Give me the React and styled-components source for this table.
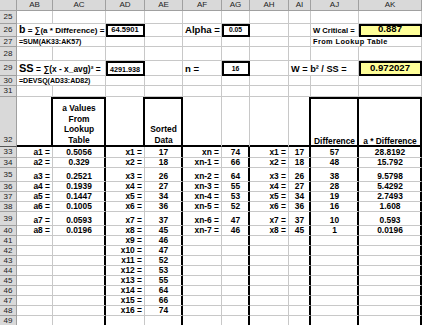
import React from 'react';
import styled, { createGlobalStyle } from 'styled-components';

const GRID = '#c8c8c8';
const INK = '#000';
const LETTERS = ['AB', 'AC', 'AD', 'AE', 'AF', 'AG', 'AH', 'AI', 'AJ', 'AK'];
const WIDTHS = [17, 36, 53, 39, 38, 39, 28, 39, 22, 48, 63];

const GlobalStyle = createGlobalStyle`
  html, body {
    margin: 0;
    padding: 0;
    background: #fff;
  }
  body {
    font-family: "Liberation Sans", Arial, sans-serif;
  }
`;

const Sheet = styled.div`
  display: grid;
  grid-template-columns: ${WIDTHS.map(w => `${w}px`).join(' ')};
  grid-template-rows: ${p => p.$rows};
  width: 422px;
  height: 325px;
  overflow: hidden;
  color: #000;
`;

const Head = styled.div`
  display: flex;
  align-items: ${p => (p.$bottom ? 'flex-end' : 'center')};
  justify-content: center;
  padding-bottom: ${p => (p.$bottom ? '2px' : '0')};
  background: #d9d9d9;
  border-right: 1px solid #a0a0a0;
  border-bottom: 1px solid ${p => (p.$dark ? '#555' : '#a0a0a0')};
  font-size: 8px;
  line-height: 1;
  color: #222;
`;

const shadow = p => {
  const s = [];
  if (p.$box) s.push(`inset 2px 2px 0 ${INK}`, `inset -1px -1px 0 ${INK}`);
  if (p.$r) s.push(`inset -1px 0 0 ${INK}`);
  if (p.$b) s.push(`inset 0 -1px 0 ${INK}`);
  if (p.$t) s.push(`inset 0 2px 0 ${INK}`);
  return s.length ? s.join(', ') : 'none';
};

const ALIGN = { left: 'flex-start', center: 'center', right: 'flex-end' };

const Cell = styled.div`
  grid-column: span ${p => p.$span || 1};
  min-width: 0;
  display: flex;
  flex-direction: column;
  justify-content: flex-end;
  align-items: ${p => ALIGN[p.$align || 'center']};
  text-align: ${p => p.$align || 'center'};
  padding: 0 ${p => (p.$box ? 3 : 2)}px ${p => (p.$box ? 2 : 1)}px;
  border-right: 1px solid ${p => (p.$r || p.$box ? INK : GRID)};
  border-bottom: 1px solid ${p => (p.$b || p.$box ? INK : GRID)};
  box-shadow: ${shadow};
  background: ${p => p.$bg || 'transparent'};
  font-size: ${p => p.$size || 8.4}px;
  font-weight: 700;
  letter-spacing: ${p => p.$track || 0}px;
  line-height: ${p => (p.$wrap ? 1.24 : 1)};
  white-space: ${p => (p.$wrap ? 'pre-line' : 'nowrap')};
`;

const Text = styled.span`
  display: block;
`;

const Big = styled.span`
  font-size: ${p => p.$size}px;
`;

const aVals = ['0.5056', '0.329', '0.2521', '0.1939', '0.1447', '0.1005', '0.0593', '0.0196'];
const sorted = [17, 18, 26, 27, 34, 36, 37, 45, 46, 47, 52, 53, 55, 64, 66, 74];
const diffs = [57, 48, 38, 28, 19, 16, 10, 1];
const prods = ['28.8192', '15.792', '9.5798', '5.4292', '2.7493', '1.608', '0.593', '0.0196'];
const dataHeights = [11, 10, 14, 10, 10, 10, 14, 10, 10, 10, 10, 10, 10, 10, 10, 10, 10];

const YELLOW = '#ffff99';

const topRows = [
  { n: 25, h: 13, cells: {} },
  {
    n: 26,
    h: 13,
    cells: {
      AB: { span: 2, align: 'left', size: 8.1, t: <><Big $size={10.5}>b</Big> = ∑(a * Difference) =</> },
      AD: { box: true, size: 7.6, t: '64.5901' },
      AF: { align: 'left', size: 9.6, t: 'Alpha =' },
      AG: { box: true, size: 6.8, t: '0.05' },
      AJ: { align: 'left', size: 7.6, t: 'W Critical =' },
      AK: { box: true, bg: YELLOW, size: 9.6, t: '0.887' },
    },
  },
  {
    n: 27,
    h: 10,
    cells: {
      AB: { span: 2, align: 'left', size: 7, t: '=SUM(AK33:AK57)' },
      AJ: { span: 2, align: 'left', size: 7.4, track: 0.4, t: 'From Lookup Table' },
    },
  },
  { n: 28, h: 14, cells: {} },
  {
    n: 29,
    h: 15,
    cells: {
      AB: { span: 2, align: 'left', size: 8.4, t: <><Big $size={11}>SS</Big> = ∑(x - x_avg)² =</> },
      AD: { box: true, size: 7.2, t: '4291.938' },
      AF: { align: 'left', size: 9.6, t: 'n =' },
      AG: { box: true, size: 6.8, t: '16' },
      AI: { span: 2, align: 'left', size: 9.2, t: 'W = b² / SS =' },
      AK: { box: true, bg: YELLOW, size: 9.6, t: '0.972027' },
    },
  },
  { n: 30, h: 10, cells: { AB: { span: 2, align: 'left', size: 7, t: '=DEVSQ(AD33:AD82)' } } },
  { n: 31, h: 11, cells: {} },
  {
    n: 32,
    h: 50,
    tall: true,
    cells: {
      AB: { r: true, b: true },
      AC: { r: true, b: true, t2: true, wrap: true, t: 'a Values\nFrom\nLookup\nTable' },
      AD: { r: true, b: true },
      AE: { r: true, b: true, t2: true, wrap: true, t: 'Sorted\nData' },
      AF: { b: true },
      AG: { b: true },
      AH: { b: true },
      AI: { r: true, b: true },
      AJ: { r: true, b: true, t2: true, t: 'Difference' },
      AK: { r: true, b: true, t2: true, t: 'a * Difference' },
    },
  },
];

const dataRows = dataHeights.map((h, i) => {
  const cells = {
    AC: { r: true },
    AE: { r: true },
    AG: { r: true },
    AI: { r: true },
    AJ: { r: true },
    AK: { r: true },
  };
  if (i < 8) {
    cells.AB = { align: 'right', t: `a${i + 1} =` };
    cells.AC.t = aVals[i];
    cells.AF = { align: 'right', t: i === 0 ? 'xn =' : `xn-${i} =` };
    cells.AG.t = sorted[15 - i];
    cells.AH = { align: 'right', t: `x${i + 1} =` };
    cells.AI.t = sorted[i];
    cells.AJ.t = diffs[i];
    cells.AK.t = prods[i];
  }
  if (i < 16) {
    cells.AD = { align: 'right', t: `x${i + 1} =` };
    cells.AE.t = sorted[i];
  }
  return { n: 33 + i, h, cells };
});

const rows = [...topRows, ...dataRows];

const SheetRow = ({ row }) => {
  const out = [
    <Head key="h" $bottom={row.tall} $dark={row.tall}>
      {row.n}
    </Head>,
  ];
  let skip = 0;
  LETTERS.forEach(col => {
    if (skip > 0) {
      skip -= 1;
      return;
    }
    const c = row.cells[col] || {};
    if (c.span) skip = c.span - 1;
    out.push(
      <Cell
        key={col}
        $span={c.span}
        $align={c.align}
        $size={c.size}
        $box={c.box}
        $bg={c.bg}
        $r={c.r}
        $b={c.b}
        $t={c.t2}
        $wrap={c.wrap}
        $track={c.track}
      >
        {c.t !== undefined && <Text>{c.t}</Text>}
      </Cell>
    );
  });
  return out;
};

export default function App() {
  const template = ['11px', ...rows.map(r => `${r.h}px`)].join(' ');
  return (
    <>
      <GlobalStyle />
      <Sheet $rows={template}>
        <Head />
        {LETTERS.map(l => (
          <Head key={l}>{l}</Head>
        ))}
        {rows.map(row => (
          <SheetRow key={row.n} row={row} />
        ))}
      </Sheet>
    </>
  );
}
